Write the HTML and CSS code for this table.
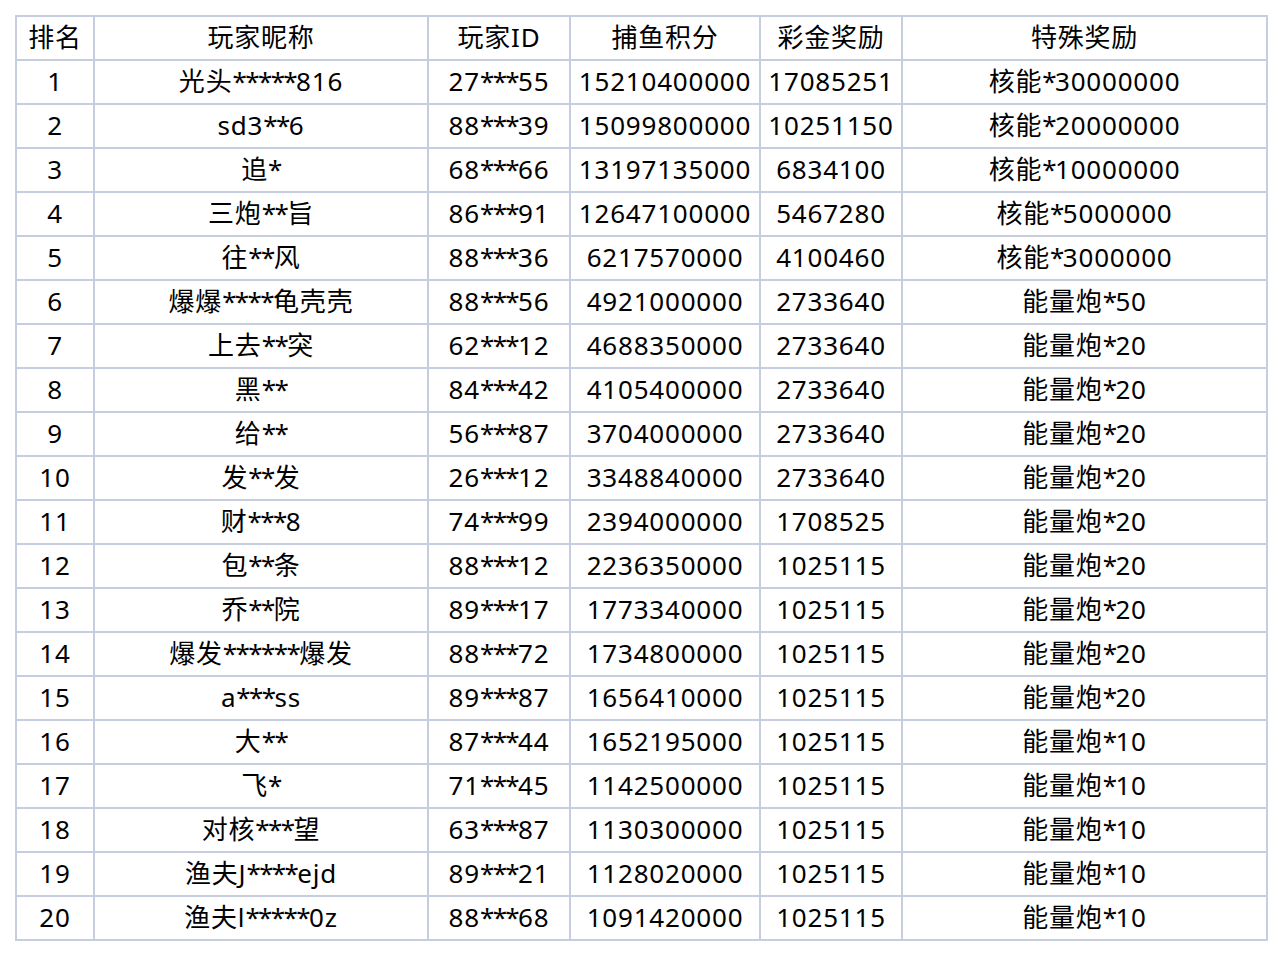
FILE: index.html
```html
<!DOCTYPE html>
<html lang="zh-CN">
<head>
<meta charset="utf-8">
<title>排名</title>
<link rel="stylesheet" href="styles.css">
</head>
<body>
<table class="rank">
<colgroup>
<col class="c1"><col class="c2"><col class="c3"><col class="c4"><col class="c5"><col class="c6">
</colgroup>
<thead>
<tr><th>排名</th><th>玩家昵称</th><th>玩家ID</th><th>捕鱼积分</th><th>彩金奖励</th><th>特殊奖励</th></tr>
</thead>
<tbody>
<tr><td>1</td><td>光头<span class="m">*****</span>816</td><td>27<span class="m">***</span>55</td><td>15210400000</td><td>17085251</td><td>核能<span class="m">*</span>30000000</td></tr>
<tr><td>2</td><td>sd3<span class="m">**</span>6</td><td>88<span class="m">***</span>39</td><td>15099800000</td><td>10251150</td><td>核能<span class="m">*</span>20000000</td></tr>
<tr><td>3</td><td>追<span class="m">*</span></td><td>68<span class="m">***</span>66</td><td>13197135000</td><td>6834100</td><td>核能<span class="m">*</span>10000000</td></tr>
<tr><td>4</td><td>三炮<span class="m">**</span>旨</td><td>86<span class="m">***</span>91</td><td>12647100000</td><td>5467280</td><td>核能<span class="m">*</span>5000000</td></tr>
<tr><td>5</td><td>往<span class="m">**</span>风</td><td>88<span class="m">***</span>36</td><td>6217570000</td><td>4100460</td><td>核能<span class="m">*</span>3000000</td></tr>
<tr><td>6</td><td>爆爆<span class="m">****</span>龟壳壳</td><td>88<span class="m">***</span>56</td><td>4921000000</td><td>2733640</td><td>能量炮<span class="m">*</span>50</td></tr>
<tr><td>7</td><td>上去<span class="m">**</span>突</td><td>62<span class="m">***</span>12</td><td>4688350000</td><td>2733640</td><td>能量炮<span class="m">*</span>20</td></tr>
<tr><td>8</td><td>黑<span class="m">**</span></td><td>84<span class="m">***</span>42</td><td>4105400000</td><td>2733640</td><td>能量炮<span class="m">*</span>20</td></tr>
<tr><td>9</td><td>给<span class="m">**</span></td><td>56<span class="m">***</span>87</td><td>3704000000</td><td>2733640</td><td>能量炮<span class="m">*</span>20</td></tr>
<tr><td>10</td><td>发<span class="m">**</span>发</td><td>26<span class="m">***</span>12</td><td>3348840000</td><td>2733640</td><td>能量炮<span class="m">*</span>20</td></tr>
<tr><td>11</td><td>财<span class="m">***</span>8</td><td>74<span class="m">***</span>99</td><td>2394000000</td><td>1708525</td><td>能量炮<span class="m">*</span>20</td></tr>
<tr><td>12</td><td>包<span class="m">**</span>条</td><td>88<span class="m">***</span>12</td><td>2236350000</td><td>1025115</td><td>能量炮<span class="m">*</span>20</td></tr>
<tr><td>13</td><td>乔<span class="m">**</span>院</td><td>89<span class="m">***</span>17</td><td>1773340000</td><td>1025115</td><td>能量炮<span class="m">*</span>20</td></tr>
<tr><td>14</td><td>爆发<span class="m">******</span>爆发</td><td>88<span class="m">***</span>72</td><td>1734800000</td><td>1025115</td><td>能量炮<span class="m">*</span>20</td></tr>
<tr><td>15</td><td>a<span class="m">***</span>ss</td><td>89<span class="m">***</span>87</td><td>1656410000</td><td>1025115</td><td>能量炮<span class="m">*</span>20</td></tr>
<tr><td>16</td><td>大<span class="m">**</span></td><td>87<span class="m">***</span>44</td><td>1652195000</td><td>1025115</td><td>能量炮<span class="m">*</span>10</td></tr>
<tr><td>17</td><td>飞<span class="m">*</span></td><td>71<span class="m">***</span>45</td><td>1142500000</td><td>1025115</td><td>能量炮<span class="m">*</span>10</td></tr>
<tr><td>18</td><td>对核<span class="m">***</span>望</td><td>63<span class="m">***</span>87</td><td>1130300000</td><td>1025115</td><td>能量炮<span class="m">*</span>10</td></tr>
<tr><td>19</td><td>渔夫J<span class="m">****</span>ejd</td><td>89<span class="m">***</span>21</td><td>1128020000</td><td>1025115</td><td>能量炮<span class="m">*</span>10</td></tr>
<tr><td>20</td><td>渔夫l<span class="m">*****</span>0z</td><td>88<span class="m">***</span>68</td><td>1091420000</td><td>1025115</td><td>能量炮<span class="m">*</span>10</td></tr>
</tbody>
</table>
</body>
</html>
```
FILE: styles.css
```css
html, body {
  margin: 0;
  background: #ffffff;
}
body {
  padding: 15px;
  font-family: "Noto Sans", "Noto Sans CJK SC", sans-serif;
  font-size: 26px;
  letter-spacing: 0.8px;
  color: #000000;
}
.rank {
  border-collapse: separate;
  border-spacing: 0;
  table-layout: fixed;
  width: 1253px;
  border-top: 2px solid #c6cddf;
  border-left: 2px solid #c6cddf;
}
.c1 { width: 78px; }
.c2 { width: 334px; }
.c3 { width: 142px; }
.c4 { width: 190px; }
.c5 { width: 142px; }
.c6 { width: 365px; }
.rank th,
.rank td {
  box-sizing: border-box;
  height: 44px;
  padding: 0 0 2px 0;
  text-align: center;
  vertical-align: middle;
  font-weight: normal;
  white-space: nowrap;
  line-height: 40px;
  border-right: 2px solid #c6cddf;
  border-bottom: 2px solid #c6cddf;
}
.m {
  letter-spacing: -1.6px;
}
```
